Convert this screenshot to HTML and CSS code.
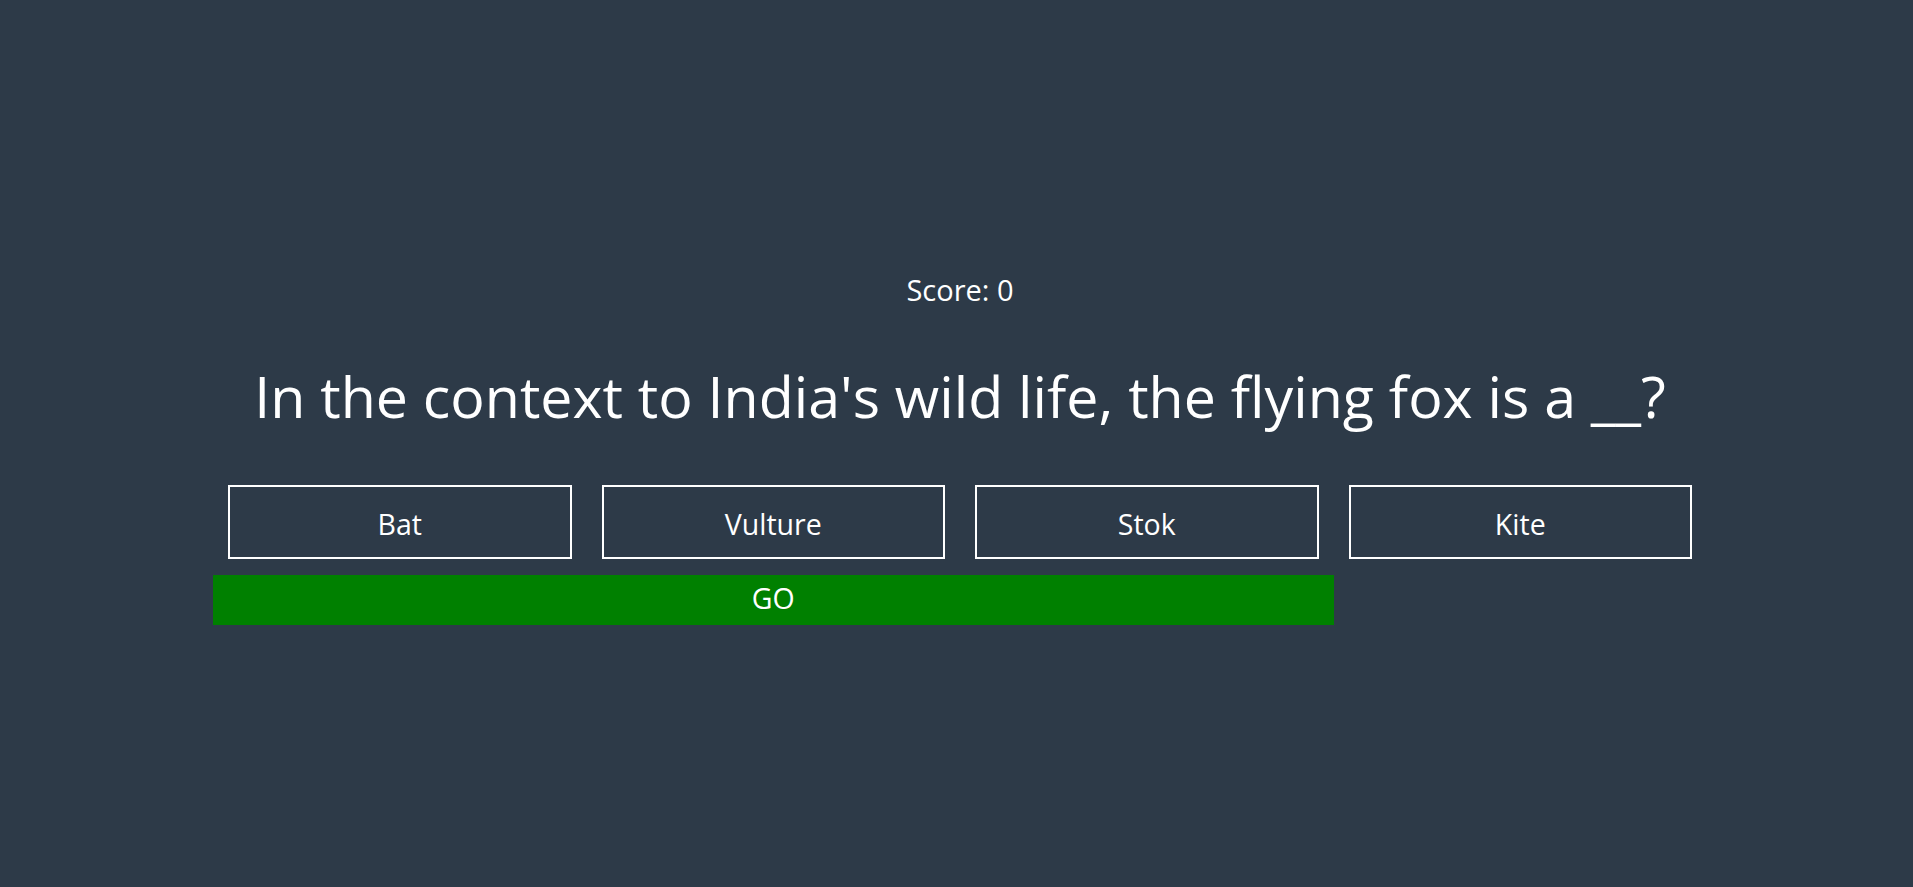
FILE: index.html
```html
<!DOCTYPE html>
<html>
<head>
<meta charset="utf-8">
<link rel="stylesheet" href="styles.css">
</head>
<body>
<div class="quiz">
  <div class="score">Score: 0</div>
  <h1 class="question">In the context to India's wild life, the flying fox is a __?</h1>
  <div class="options">
    <button class="option">Bat</button>
    <button class="option">Vulture</button>
    <button class="option">Stok</button>
    <button class="option">Kite</button>
  </div>
  <button class="go">GO</button>
</div>
</body>
</html>
```
FILE: styles.css
```css
html, body {
  margin: 0;
  padding: 0;
  background: #2d3a48;
  height: 100%;
}
body {
  font-family: "Open Sans", "Noto Sans", sans-serif;
  color: #ffffff;
}
.quiz {
  width: 1494px;
  margin-left: 213px;
  padding-top: 272px;
}
.score {
  text-align: center;
  font-size: 29px;
  line-height: 36px;
}
.question {
  margin: 50px 0 0;
  text-align: center;
  font-weight: 400;
  font-size: 57.3px;
  line-height: 76px;
}
.options {
  display: flex;
  margin-top: 51px;
}
.option {
  width: calc(25% - 30px);
  margin: 0 15px;
  height: 74px;
  background: transparent;
  border: 2px solid #ffffff;
  color: #ffffff;
  font-family: inherit;
  font-size: 28.5px;
  padding: 4px 0 0;
}
.go {
  display: block;
  width: 75%;
  height: 50px;
  margin-top: 16px;
  background: #008000;
  border: none;
  color: #ffffff;
  font-family: inherit;
  font-size: 28.5px;
  padding: 0 0 5px;
}
```
